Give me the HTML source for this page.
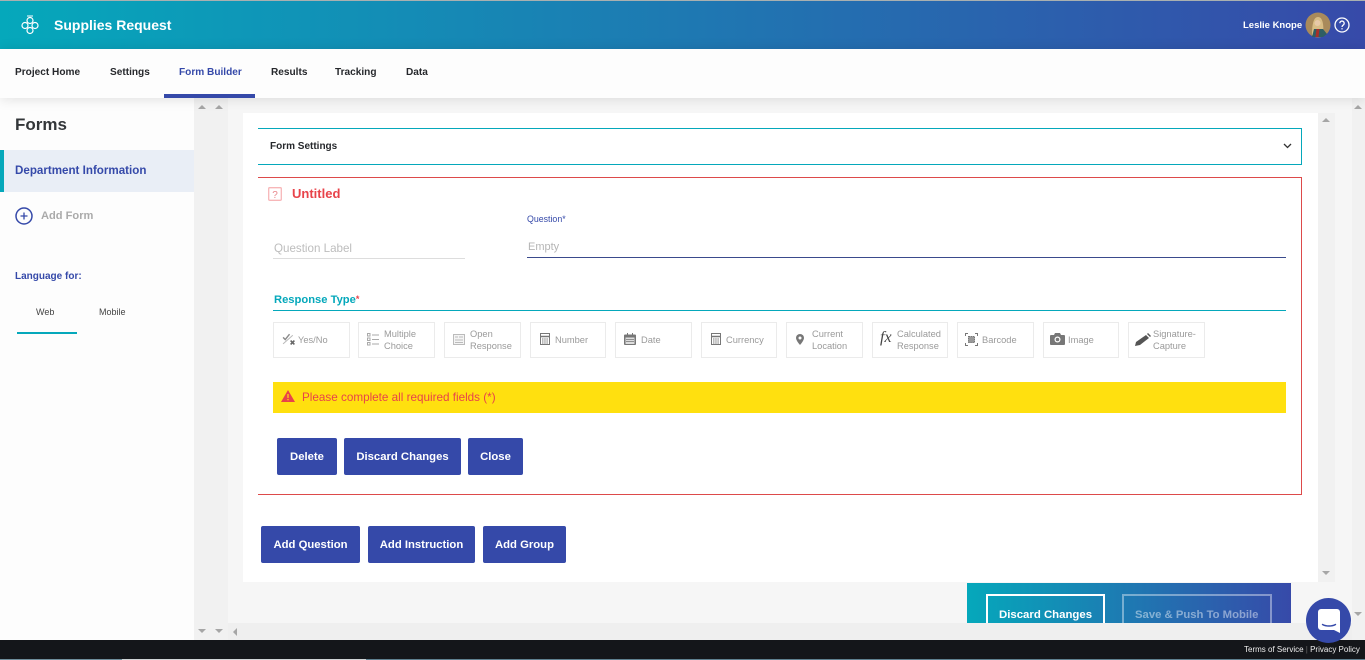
<!DOCTYPE html>
<html><head><meta charset="utf-8"><title>Supplies Request</title>
<style>
html,body{margin:0;padding:0;width:1365px;height:660px;overflow:hidden;background:#f6f6f6;font-family:"Liberation Sans",sans-serif}
.a,.t{position:absolute}
.t{white-space:nowrap;line-height:1}
.nav{font-size:10.1px;font-weight:bold;color:#26282c;top:68px}
.btn{position:absolute;background:#3549a9;border-radius:2px;color:#fff;font-weight:bold;font-size:11.3px;text-align:center;height:37px;line-height:39px;white-space:nowrap}
.rt{position:absolute;top:322px;height:34px;border:1px solid #ebebeb;background:#fff;color:#9a9a9a;font-size:9.3px;line-height:12px}
.rt span{position:absolute;white-space:nowrap}
.rt svg{position:absolute}
.up{width:0;height:0;border-left:4px solid transparent;border-right:4px solid transparent;border-bottom:4px solid #a6a6a6;position:absolute}
.dn{width:0;height:0;border-left:4px solid transparent;border-right:4px solid transparent;border-top:4px solid #a6a6a6;position:absolute}
</style></head><body>
<div class="a" style="left:0;top:0;width:1365px;height:1px;background:#a9b0b0"></div>
<div class="a" style="left:0;top:1px;width:1365px;height:48px;background:linear-gradient(90deg,#05a8bb,#374aa9)"></div>
<svg class="a" style="left:20px;top:14px" width="20" height="22" viewBox="0 0 20 22" fill="none" stroke="#fff" stroke-width="1.2"><path d="M7 2h6" stroke-width="1"/><circle cx="10" cy="6.500" r="3"/><circle cx="5" cy="11.500" r="3"/><circle cx="15" cy="11.500" r="3"/><circle cx="10" cy="16.500" r="3"/></svg>
<div class="t" style="left:54px;top:18px;font-size:14px;font-weight:bold;color:#fff">Supplies Request</div>
<div class="t" style="left:1243px;top:21px;font-size:9.5px;font-weight:bold;color:#fff">Leslie Knope</div>
<svg class="a" style="left:1305px;top:12px" width="26" height="26" viewBox="0 0 26 26"><circle cx="13" cy="13" r="12.500" fill="#a98a5b"/><path d="M7 23c0-9 1-18 6-18s6 9 5 18z" fill="#d9bd85"/><circle cx="12.500" cy="11" r="3" fill="#e8c9a8"/><path d="M7 25l2-8h9l4 5-4 3z" fill="#2f5e63"/><path d="M10.500 25l1-8h3l-1 8z" fill="#a82f2a"/></svg>
<svg class="a" style="left:1334px;top:17px" width="16" height="16" viewBox="0 0 16 16" fill="none" stroke="#fff" stroke-width="1.3"><circle cx="8" cy="8" r="7"/><path d="M5.800 6.200a2.200 2.200 0 1 1 3.400 1.900c-.8.5-1.200 1-1.200 1.900"/><path d="M8 11.200v1.200"/></svg>

<div class="a" style="left:0;top:49px;width:1365px;height:49px;background:#fdfdfd;box-shadow:0 1px 12px rgba(0,0,0,.12);z-index:3"></div>
<div style="position:absolute;z-index:4;left:0;top:0">
<div class="t nav" style="left:15px">Project Home</div>
<div class="t nav" style="left:110px">Settings</div>
<div class="t nav" style="left:179px;color:#3549a9">Form Builder</div>
<div class="a" style="left:164px;top:94px;width:91px;height:4px;background:#3549a9"></div>
<div class="t nav" style="left:271px">Results</div>
<div class="t nav" style="left:335px">Tracking</div>
<div class="t nav" style="left:406px">Data</div>
</div>

<div class="a" style="left:0;top:98px;width:194px;height:542px;background:#fdfdfd"></div>
<div class="a" style="left:194px;top:98px;width:34px;height:542px;background:#f1f1f1"></div>
<div class="up" style="left:198px;top:105px"></div><div class="up" style="left:215px;top:105px"></div>
<div class="dn" style="left:198px;top:629px"></div><div class="dn" style="left:215px;top:629px"></div>
<div class="t" style="left:15px;top:116px;font-size:17px;font-weight:bold;color:#333639">Forms</div>
<div class="a" style="left:0;top:150px;width:194px;height:42px;background:#e9eef6"></div>
<div class="a" style="left:0;top:150px;width:4px;height:42px;background:#05a8bb"></div>
<div class="t" style="left:15px;top:165px;font-size:11.6px;font-weight:bold;color:#3549a9">Department Information</div>
<svg class="a" style="left:15px;top:207px" width="18" height="18" viewBox="0 0 18 18" fill="none" stroke="#3549a9"><circle cx="9" cy="9" r="8" stroke-width="1.5"/><path d="M5.500 9h7M9 5.500v7" stroke-width="1.3"/></svg>
<div class="t" style="left:41px;top:211px;font-size:11.1px;font-weight:bold;color:#aaa">Add Form</div>
<div class="t" style="left:15px;top:272px;font-size:10px;font-weight:bold;color:#3549a9">Language for:</div>
<div class="t" style="left:36px;top:308px;font-size:9px;color:#444">Web</div>
<div class="t" style="left:99px;top:308px;font-size:9px;color:#444">Mobile</div>
<div class="a" style="left:17px;top:332px;width:60px;height:2px;background:#05a8bb"></div>

<div class="a" style="left:243px;top:113px;width:1075px;height:469px;background:#fff"></div>
<div class="a" style="left:1318px;top:113px;width:17px;height:469px;background:#f1f1f1"></div>
<div class="up" style="left:1322px;top:118px"></div><div class="dn" style="left:1322px;top:571px"></div>
<div class="a" style="left:1352px;top:98px;width:13px;height:542px;background:#f1f1f1"></div>
<div class="up" style="left:1354px;top:105px"></div><div class="dn" style="left:1354px;top:612px"></div>

<div class="a" style="left:258px;top:128px;width:1044px;height:37px;box-sizing:border-box;border:1px solid #05a8bb;border-left:0"></div>
<div class="t" style="left:270px;top:142px;font-size:10px;font-weight:bold;color:#26282c">Form Settings</div>
<svg class="a" style="left:1283px;top:143px" width="9" height="6" viewBox="0 0 9 6" fill="none" stroke="#333" stroke-width="1.3"><path d="M1 1l3.500 3.500L8 1"/></svg>

<div class="a" style="left:258px;top:177px;width:1044px;height:318px;box-sizing:border-box;border:1px solid #dd4a4a;border-left:0"></div>
<svg class="a" style="left:268px;top:187px" width="14" height="14" viewBox="0 0 14 14"><rect x=".7" y=".7" width="12.600" height="12.600" rx="1" fill="#fff" stroke="#f7b6b8" stroke-width="1.3"/><text x="7" y="11" font-size="10" text-anchor="middle" fill="#e8888c" font-family="Liberation Sans">?</text></svg>
<div class="t" style="left:292px;top:187px;font-size:13px;font-weight:bold;color:#e8434a">Untitled</div>
<div class="t" style="left:274px;top:243px;font-size:11.6px;color:#bdbdbd">Question Label</div>
<div class="a" style="left:273px;top:258px;width:192px;height:1px;background:#ddd"></div>
<div class="t" style="left:527px;top:215px;font-size:8.800px;color:#3549a9">Question*</div>
<div class="t" style="left:528px;top:242px;font-size:11px;color:#b5b5b5">Empty</div>
<div class="a" style="left:527px;top:257px;width:759px;height:1px;background:#3a4a8c"></div>
<div class="t" style="left:274px;top:295px;font-size:11.200px;font-weight:bold;color:#05a8bb">Response Type<span style="color:#e8434a;font-size:9px;vertical-align:1px">*</span></div>
<div class="a" style="left:273px;top:310px;width:1013px;height:1px;background:#05a8bb"></div>

<div class="rt" style="left:273px;width:75px"><svg style="left:8px;top:9px" width="14" height="14" viewBox="0 0 13 13" fill="none" stroke="#8a8a8a"><path d="M1 5l2 2 4-5" stroke-width="1.300"/><path d="M1 11L10 3" stroke="#bbb"/><path d="M8 8l3.500 3.500M11.500 8L8 11.500" stroke-width="1.500" stroke="#666"/></svg><span style="left:24px;top:11px">Yes/No</span></div>
<div class="rt" style="left:358px;width:75px"><svg style="left:8px;top:10px" width="12" height="13" viewBox="0 0 12 13" fill="none" stroke="#aaa"><rect x=".5" y=".5" width="2.500" height="2.500"/><rect x=".5" y="5" width="2.500" height="2.500"/><rect x=".5" y="9.500" width="2.500" height="2.500"/><path d="M5 2h7M5 6.500h7M5 11h7"/></svg><span style="left:25px;top:5px">Multiple<br>Choice</span></div>
<div class="rt" style="left:444px;width:75px"><svg style="left:8px;top:11px" width="12" height="11" viewBox="0 0 12 11" fill="none" stroke="#bbb"><rect x=".5" y=".5" width="11" height="10" fill="#f4f4f4"/><path d="M2 3h3M6 3h4M2 6h8M2 8.500h8"/></svg><span style="left:25px;top:5px">Open<br>Response</span></div>
<div class="rt" style="left:530px;width:74px"><svg style="left:9px;top:10px" width="10" height="12" viewBox="0 0 10 12" fill="none" stroke="#777"><rect x=".5" y=".5" width="9" height="11"/><path d="M1 3.500h8" stroke-width="1.500"/><path d="M2 6h6M2 8h6M2 10h6" stroke-dasharray="1.500 .7"/></svg><span style="left:24px;top:11px">Number</span></div>
<div class="rt" style="left:615px;width:75px"><svg style="left:8px;top:10px" width="12" height="12" viewBox="0 0 12 12" fill="#777"><path d="M1 1.500h10a1 1 0 0 1 1 1V11a1 1 0 0 1-1 1H1a1 1 0 0 1-1-1V2.500a1 1 0 0 1 1-1z"/><path d="M1.500 4.500h9V11h-9z" fill="#ddd"/><path d="M3 0h1v2H3zM8 0h1v2H8zM2 6h8v.8H2zM2 8h8v.8H2z"/></svg><span style="left:25px;top:11px">Date</span></div>
<div class="rt" style="left:701px;width:74px"><svg style="left:9px;top:10px" width="10" height="12" viewBox="0 0 10 12" fill="none" stroke="#777"><rect x=".5" y=".5" width="9" height="11"/><path d="M1 3.500h8" stroke-width="1.500"/><path d="M2 6h6M2 8h6M2 10h6" stroke-dasharray="1.500 .7"/></svg><span style="left:24px;top:11px">Currency</span></div>
<div class="rt" style="left:786px;width:75px"><svg style="left:9px;top:11px" width="8" height="11" viewBox="0 0 8 11"><path d="M4 0a4 4 0 0 1 4 4c0 2.500-4 7-4 7S0 6.500 0 4a4 4 0 0 1 4-4z" fill="#777"/><circle cx="4" cy="4" r="1.500" fill="#fff"/></svg><span style="left:25px;top:5px">Current<br>Location</span></div>
<div class="rt" style="left:872px;width:74px"><span style="left:7px;top:9px;font-family:'Liberation Serif',serif;font-style:italic;font-size:16px;color:#444">fx</span><span style="left:24px;top:5px">Calculated<br>Response</span></div>
<div class="rt" style="left:957px;width:75px"><svg style="left:7px;top:10px" width="13" height="13" viewBox="0 0 13 13" fill="none" stroke="#777"><path d="M.5 3V.5H3M10 .5h2.500V3M12.500 10v2.500H10M3 12.500H.5V10"/><path d="M3.500 3.500h6v6h-6z" fill="#999" stroke="#777" stroke-dasharray="1.500 .6"/></svg><span style="left:24px;top:11px">Barcode</span></div>
<div class="rt" style="left:1043px;width:74px"><svg style="left:6px;top:10px" width="15" height="12" viewBox="0 0 15 12"><path d="M1 2h3l1-2h5l1 2h3a1 1 0 0 1 1 1v8a1 1 0 0 1-1 1H1a1 1 0 0 1-1-1V3a1 1 0 0 1 1-1z" fill="#777"/><circle cx="7.500" cy="6.500" r="3" fill="#fff"/><circle cx="7.500" cy="6.500" r="1.800" fill="#777"/></svg><span style="left:24px;top:11px">Image</span></div>
<div class="rt" style="left:1128px;width:75px"><svg style="left:6px;top:10px" width="16" height="13" viewBox="0 0 16 13"><path d="M0 13l1-4L11 2l3 3-9 7z" fill="#555"/><path d="M12 1l1-1 3 3-1 1z" fill="#555"/></svg><span style="left:24px;top:5px">Signature-<br>Capture</span></div>

<div class="a" style="left:273px;top:382px;width:1013px;height:31px;background:#ffe00f"></div>
<svg class="a" style="left:281px;top:390px" width="14" height="12" viewBox="0 0 14 12"><path d="M7 0l7 12H0z" fill="#e8434a"/><path d="M6.400 4h1.200v4H6.400zM6.400 9h1.200v1.300H6.400z" fill="#ffe00f"/></svg>
<div class="t" style="left:302px;top:392px;font-size:11.700px;color:#e8434a">Please complete all required fields (*)</div>

<div class="btn" style="left:277px;top:438px;width:60px">Delete</div>
<div class="btn" style="left:344px;top:438px;width:117px">Discard Changes</div>
<div class="btn" style="left:468px;top:438px;width:55px">Close</div>
<div class="btn" style="left:261px;top:526px;width:99px">Add Question</div>
<div class="btn" style="left:368px;top:526px;width:107px">Add Instruction</div>
<div class="btn" style="left:483px;top:526px;width:83px">Add Group</div>

<div class="a" style="left:967px;top:583px;width:324px;height:40px;background:linear-gradient(90deg,#05a8bb,#374aa9);overflow:hidden">
  <div class="a" style="left:19px;top:11px;width:119px;height:40px;border:2px solid #fff;box-sizing:border-box"></div>
  <div class="t" style="left:32px;top:27px;font-size:11.400px;font-weight:bold;color:#fff">Discard Changes</div>
  <div class="a" style="left:155px;top:11px;width:150px;height:40px;border:2px solid rgba(255,255,255,.4);box-sizing:border-box"></div>
  <div class="t" style="left:168px;top:27px;font-size:11.300px;font-weight:bold;color:rgba(255,255,255,.45)">Save &amp; Push To Mobile</div>
</div>

<div class="a" style="left:228px;top:623px;width:1124px;height:17px;background:#efefef"></div>
<div class="a" style="left:233px;top:628px;width:0;height:0;border-top:4px solid transparent;border-bottom:4px solid transparent;border-right:4px solid #a6a6a6"></div>

<div class="a" style="left:0;top:640px;width:1365px;height:20px;background:#14161a"></div>
<div class="a" style="left:0;top:659px;width:122px;height:1px;background:#6f8e9c"></div>
<div class="a" style="left:122px;top:659px;width:244px;height:1px;background:#cfd4d6"></div>
<div class="a" style="left:366px;top:659px;width:999px;height:1px;background:#5f8090"></div>
<div class="t" style="left:1244px;top:646px;font-size:8px;color:#eee">Terms of Service <span style="color:#666">|</span> Privacy Policy</div>

<div class="a" style="left:1306px;top:598px;width:45px;height:45px;border-radius:50%;background:#3549a9;z-index:5"></div>
<svg class="a" style="left:1318px;top:609px;z-index:6" width="22" height="24" viewBox="0 0 22 24"><path d="M3 0h16a3 3 0 0 1 3 3v21l-6-3H3a3 3 0 0 1-3-3V3a3 3 0 0 1 3-3z" fill="#fff"/><path d="M4.500 15.500c3.500 2 9.500 2 13 0" fill="none" stroke="#3549a9" stroke-width="1.400" stroke-linecap="round"/></svg>
</body></html>
